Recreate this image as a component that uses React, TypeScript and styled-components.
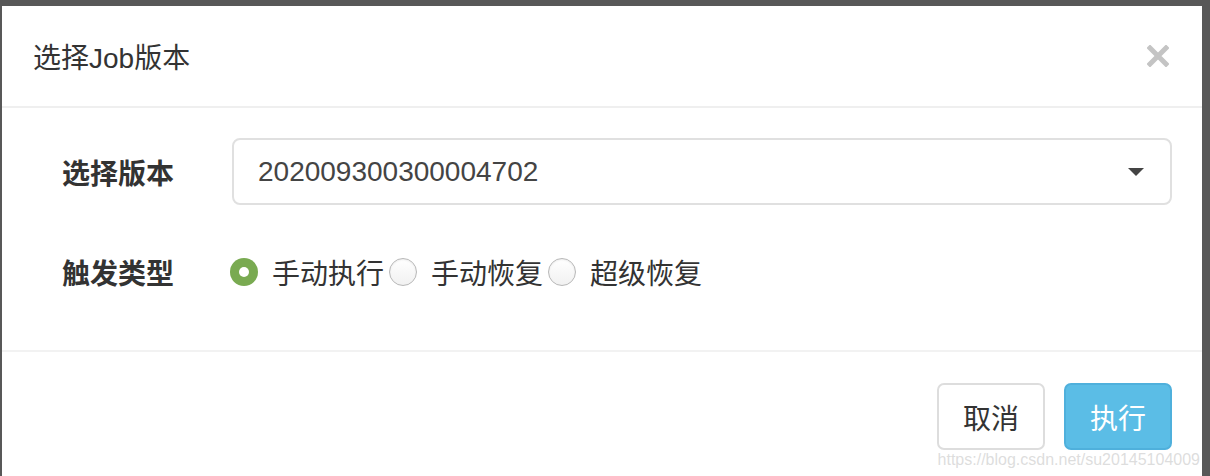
import React, { useState } from 'react'
import styled, { createGlobalStyle, css } from 'styled-components'

const GlobalStyle = createGlobalStyle`
  html, body {
    margin: 0;
    padding: 0;
    background: #585858;
    font-family: "Liberation Sans", "Noto Sans CJK SC", sans-serif;
  }
  #root {
    padding: 6px 8px 0 2px;
  }
`

const cjk = `"Liberation Sans", "Noto Sans CJK SC", sans-serif`

const Modal = styled.div`
  position: relative;
  height: 470px;
  background: #fff;
  display: flex;
  flex-direction: column;
  overflow: hidden;
`

const Header = styled.div`
  height: 100px;
  display: flex;
  align-items: center;
  justify-content: space-between;
  padding: 0 32px 0 31px;
  border-bottom: 2px solid #efefef;
`

const Title = styled.h4`
  margin: 0;
  font-family: ${cjk};
  font-size: 28px;
  font-weight: normal;
  color: #333;
`

const Close = styled.button`
  border: 0;
  background: transparent;
  padding: 0;
  width: 24px;
  height: 24px;
  display: flex;
  align-items: center;
  justify-content: center;
  cursor: pointer;
`

const Body = styled.div`
  padding: 30px 30px 58px 60px;
  display: flex;
  flex-direction: column;
  gap: 47px;
  border-bottom: 2px solid #f2f2f2;
`

const Row = styled.div<{ $height: number }>`
  display: flex;
  align-items: center;
  height: ${({ $height }) => $height}px;
`

const Label = styled.label`
  width: 170px;
  flex: none;
  font-family: ${cjk};
  font-size: 28px;
  font-weight: bold;
  color: #333;
`

const Select = styled.div`
  flex: 1;
  height: 67px;
  box-sizing: border-box;
  border: 2px solid #e0e0e0;
  border-radius: 8px;
  display: flex;
  align-items: center;
  justify-content: space-between;
  padding: 0 26px 0 24px;
  font-family: ${cjk};
  font-size: 28px;
  color: #444;
`

const Caret = styled.span`
  width: 0;
  height: 0;
  border-left: 8px solid transparent;
  border-right: 8px solid transparent;
  border-top: 8px solid #444;
`

const RadioGroup = styled.div`
  display: flex;
  align-items: center;
  gap: 5px;
  margin-left: -2px;
`

const Option = styled.label`
  display: flex;
  align-items: center;
  gap: 14px;
  font-family: ${cjk};
  font-size: 28px;
  color: #333;
  cursor: pointer;
`

const RadioDot = styled.span<{ $checked?: boolean }>`
  width: 28px;
  height: 28px;
  border-radius: 50%;
  box-sizing: border-box;
  display: flex;
  align-items: center;
  justify-content: center;
  flex: none;

  ${({ $checked }) =>
    $checked
      ? css`
          background: #79aa51;
          &::after {
            content: '';
            width: 10px;
            height: 10px;
            border-radius: 50%;
            background: #fff;
          }
        `
      : css`
          border: 1px solid #b8b8b8;
          background: linear-gradient(#ffffff, #f1f1f1);
          box-shadow: inset 0 1px 2px rgba(0, 0, 0, 0.08);
        `}
`

const Footer = styled.div`
  display: flex;
  justify-content: flex-end;
  gap: 19px;
  padding: 31px 30px 0 0;
`

const Button = styled.button<{ $primary?: boolean }>`
  height: 67px;
  padding: 0 24px;
  border-radius: 7px;
  font-family: ${cjk};
  font-size: 28px;
  cursor: pointer;

  ${({ $primary }) =>
    $primary
      ? css`
          background: #5bbde6;
          border: 2px solid #4fb0dc;
          color: #fff;
        `
      : css`
          background: #fff;
          border: 2px solid #dddddd;
          color: #333;
        `}
`

const Watermark = styled.span`
  position: absolute;
  right: 2px;
  bottom: 7px;
  font-family: "Liberation Sans", sans-serif;
  font-size: 16px;
  color: rgba(215, 215, 215, 0.85);
  pointer-events: none;
`

const options = ['手动执行', '手动恢复', '超级恢复']

const App: React.FC = () => {
  const [type, setType] = useState(0)

  return (
    <>
      <GlobalStyle />
      <Modal>
        <Header>
          <Title>选择Job版本</Title>
          <Close aria-label="close">
            <svg width="22" height="22" viewBox="0 0 22 22">
              <path d="M3 3 L19 19 M19 3 L3 19" stroke="#c4c4c4" strokeWidth="5" strokeLinecap="square" />
            </svg>
          </Close>
        </Header>

        <Body>
          <Row $height={67}>
            <Label>选择版本</Label>
            <Select>
              <span>202009300300004702</span>
              <Caret />
            </Select>
          </Row>

          <Row $height={40}>
            <Label>触发类型</Label>
            <RadioGroup>
              {options.map((o, i) => (
                <Option key={o} onClick={() => setType(i)}>
                  <RadioDot $checked={type === i} />
                  {o}
                </Option>
              ))}
            </RadioGroup>
          </Row>
        </Body>

        <Footer>
          <Button>取消</Button>
          <Button $primary>执行</Button>
        </Footer>

        <Watermark>https://blog.csdn.net/su20145104009</Watermark>
      </Modal>
    </>
  )
}

export default App
